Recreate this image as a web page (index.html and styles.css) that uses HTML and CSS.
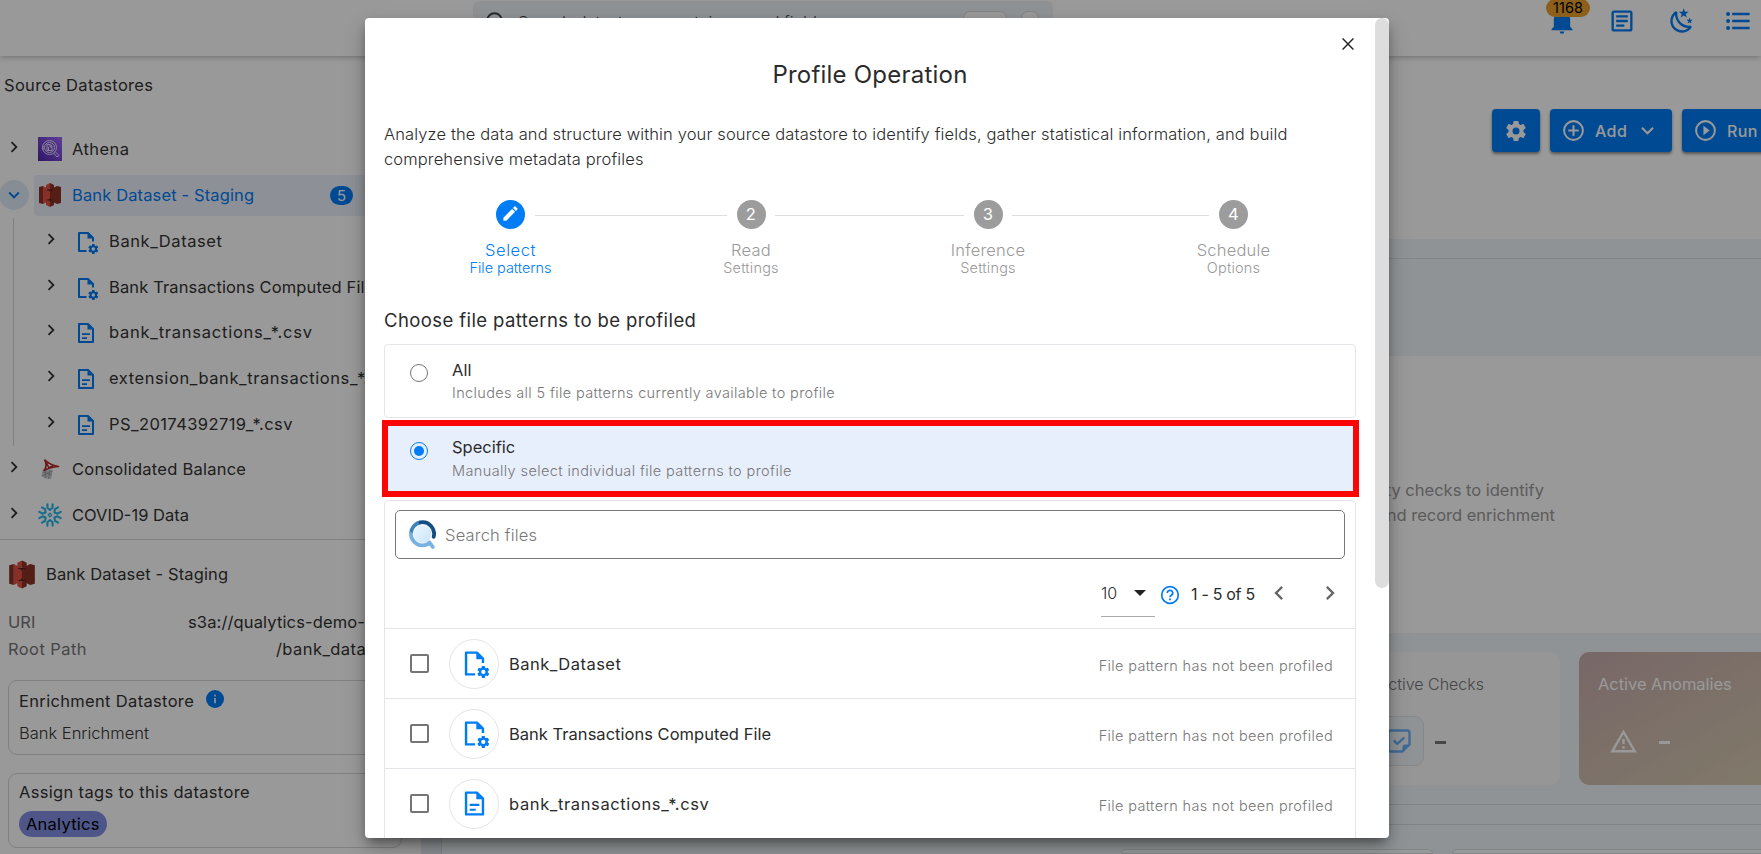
FILE: index.html
```html
<!DOCTYPE html>
<html lang="en">
<head>
<meta charset="utf-8">
<title>Profile Operation</title>
<link rel="stylesheet" href="styles.css">
</head>
<body>
<svg class="sprite" width="0" height="0" aria-hidden="true">
  <defs>
    <linearGradient id="athena" x1="0" y1="1" x2="1" y2="0"><stop offset="0" stop-color="#4d27a8"/><stop offset="1" stop-color="#a166ff"/></linearGradient>
    <linearGradient id="lens" x1="0" y1="0" x2="1" y2="1"><stop offset="0" stop-color="#eef8ff"/><stop offset="1" stop-color="#c7e4f9"/></linearGradient>
  </defs>
  <symbol id="i-right" viewBox="0 0 24 24"><path fill="currentColor" d="M8.59,16.58L13.17,12L8.59,7.41L10,6L16,12L10,18L8.59,16.58Z"/></symbol>
  <symbol id="i-left" viewBox="0 0 24 24"><path fill="currentColor" d="M15.41,16.58L10.83,12L15.41,7.41L14,6L8,12L14,18L15.41,16.58Z"/></symbol>
  <symbol id="i-down" viewBox="0 0 24 24"><path fill="currentColor" d="M7.41,8.58L12,13.17L16.59,8.58L18,10L12,16L6,10L7.41,8.58Z"/></symbol>
  <symbol id="i-cog" viewBox="0 0 24 24"><path fill="currentColor" d="M12,15.5A3.5,3.5 0 0,1 8.5,12A3.5,3.5 0 0,1 12,8.5A3.5,3.5 0 0,1 15.5,12A3.5,3.5 0 0,1 12,15.5M19.43,12.97C19.47,12.65 19.5,12.33 19.5,12C19.5,11.67 19.47,11.34 19.43,11L21.54,9.37C21.73,9.22 21.78,8.95 21.66,8.73L19.66,5.27C19.54,5.05 19.27,4.96 19.05,5.05L16.56,6.05C16.04,5.66 15.5,5.32 14.87,5.07L14.5,2.42C14.46,2.18 14.25,2 14,2H10C9.75,2 9.54,2.18 9.5,2.42L9.13,5.07C8.5,5.32 7.96,5.66 7.44,6.05L4.95,5.05C4.73,4.96 4.46,5.05 4.34,5.27L2.34,8.73C2.21,8.95 2.27,9.22 2.46,9.37L4.57,11C4.53,11.34 4.5,11.67 4.5,12C4.5,12.33 4.53,12.65 4.57,12.97L2.46,14.63C2.27,14.78 2.21,15.05 2.34,15.27L4.34,18.73C4.46,18.95 4.73,19.03 4.95,18.95L7.44,17.94C7.96,18.34 8.5,18.68 9.13,18.93L9.5,21.58C9.54,21.82 9.75,22 10,22H14C14.25,22 14.46,21.82 14.5,21.58L14.87,18.93C15.5,18.67 16.04,18.34 16.56,17.94L19.05,18.95C19.27,19.03 19.54,18.95 19.66,18.73L21.66,15.27C21.78,15.05 21.73,14.78 21.54,14.63L19.43,12.97Z"/></symbol>
  <symbol id="i-file" viewBox="0 0 24 24"><path fill="none" stroke="currentColor" stroke-width="2" stroke-linejoin="round" d="M5 3H14L19 8V21H5Z"/><path fill="currentColor" d="M13.500 2L20 8.500H13.500Z"/><path stroke="currentColor" stroke-width="1.800" d="M8 13.200H16M8 17.200H13"/></symbol>
  <symbol id="i-filecog" viewBox="0 0 24 24" overflow="visible"><path fill="none" stroke="currentColor" stroke-width="2" stroke-linejoin="round" d="M12.500 21H5V3H14L19 8V11.500"/><path fill="currentColor" d="M13.500 2L20 8.500H13.500Z"/><svg x="13.300" y="13" width="12" height="12" viewBox="0 0 24 24"><use href="#i-cog"/></svg></symbol>
  <symbol id="i-s3" viewBox="0 0 24 26"><path fill="#8c3123" d="M1 5L5 4V22L1 21Z"/><path fill="#e05243" d="M5 4L11 7V19L5 22Z"/><path fill="#8c3123" d="M23 5L19 4L13 7V19L19 22L23 21Z"/><path fill="#8c3123" d="M11 8H13V18H11Z"/><path fill="#8c3123" d="M12 1L16 3V8L12 7Z"/><path fill="#e05243" d="M12 1L8 3V8L12 7Z"/><path fill="#e05243" d="M12 25L8 23V18L12 19Z"/><path fill="#8c3123" d="M12 25L16 23V18L12 19Z"/><path fill="#e05243" d="M8 10L12 9.500V16.500L8 16Z"/><path fill="#8c3123" d="M16 10L12 9.500V16.500L16 16Z"/><path fill="#5e1f18" d="M8 8L12 7L16 8L12 9ZM8 18L12 17L16 18L12 19Z"/></symbol>
  <symbol id="i-athena" viewBox="0 0 24 24"><path fill="url(#athena)" d="M0 0H24V24H0Z"/><g fill="none" stroke="#e6dcff" stroke-width="1"><circle cx="11.500" cy="10.500" r="7"/><circle cx="11.500" cy="10.500" r="5"/><path d="M9 7.500H12L14 9V13.500H9ZM12 7.500V10H14M10.500 10V13M15.500 16L19 20L21 18.500L17 14.500M4 10H6M4 12H6"/></g></symbol>
  <symbol id="i-sql" viewBox="0 0 24 24"><path fill="#c9ccd0" d="M5 12L15 13L13 22L8 21.500L3.500 19Z"/><path stroke="#8d9094" stroke-width=".7" fill="none" d="M4.500 15L14 18M8 12.500L7 21M12 13L10.500 22M4 19L14 14"/><path fill="none" stroke="#b5292a" stroke-width="1.600" stroke-linejoin="round" d="M6.500 2.500C8.500 6.500 9 10 6 13.500C10 11 15 10 20.500 9.500C15 8.500 10 6.500 6.500 2.500M8.500 6L11 11L15 8.500"/></symbol>
  <symbol id="i-snow" viewBox="0 0 24 24"><g fill="none" stroke="#29b5e8" stroke-width="2.100" stroke-linecap="round" stroke-linejoin="round"><g id="arm"><path d="M9.400 1.200V4.800L12 6.900L14.600 4.800V1.200"/></g><use href="#arm" transform="rotate(60 12 12)"/><use href="#arm" transform="rotate(120 12 12)"/><use href="#arm" transform="rotate(180 12 12)"/><use href="#arm" transform="rotate(240 12 12)"/><use href="#arm" transform="rotate(300 12 12)"/></g><path fill="none" stroke="#29b5e8" stroke-width="1.200" d="M12 10.200L13.800 12L12 13.800L10.200 12Z"/></symbol>
</svg>

<div class="app">
  <header class="topbar">
    <div class="omnibox">
      <svg class="ico22" viewBox="0 0 22 22"><circle cx="10.500" cy="9.500" r="7.300" fill="none" stroke="#444" stroke-width="2"/><path stroke="#444" stroke-width="2" d="M16 15l5 5"/></svg>
      <span class="omnibox-text">Search datastores, containers and fields</span>
      <span class="key key-wide"></span><span class="key"></span>
    </div>
    <div class="top-icons">
      <div class="bell"><svg class="ico28" viewBox="0 0 24 24"><path fill="currentColor" d="M21,19V20H3V19L5,17V11C5,7.900 7.030,5.170 10,4.290C10,4.190 10,4.100 10,4A2,2 0 0,1 12,2A2,2 0 0,1 14,4C14,4.100 14,4.190 14,4.290C16.970,5.170 19,7.900 19,11V17L21,19M14,21A2,2 0 0,1 12,23A2,2 0 0,1 10,21"/></svg><span class="bell-count">1168</span></div>
      <svg class="ico28" viewBox="0 0 24 24"><path fill="currentColor" d="M5,3C3.890,3 3,3.890 3,5V19C3,20.110 3.890,21 5,21H19C20.110,21 21,20.110 21,19V5C21,3.890 20.110,3 19,3H5M5,5H19V19H5V5M7,7V9H17V7H7M7,11V13H17V11H7M7,15V17H14V15H7Z"/></svg>
      <svg class="ico28" viewBox="0 0 24 24"><path fill="currentColor" d="M17.750,4.090L15.220,6.030L16.130,9.090L13.500,7.280L10.870,9.090L11.780,6.030L9.250,4.090L12.440,4L13.500,1L14.560,4L17.750,4.090M21.250,11L19.610,12.250L20.200,14.230L18.500,13.060L16.800,14.230L17.390,12.250L15.750,11L17.810,10.950L18.500,9L19.190,10.950L21.250,11M18.970,15.950C19.800,15.870 20.690,17.050 20.160,17.800C19.840,18.250 19.500,18.670 19.080,19.070C15.170,23 8.840,23 4.940,19.070C1.030,15.170 1.030,8.830 4.940,4.930C5.340,4.530 5.760,4.170 6.210,3.850C6.960,3.320 8.140,4.210 8.060,5.040C7.790,7.900 8.750,10.870 10.950,13.060C13.140,15.260 16.100,16.220 18.970,15.950M17.330,17.970C14.500,17.810 11.700,16.640 9.530,14.500C7.360,12.310 6.200,9.500 6.040,6.680C3.230,9.820 3.340,14.640 6.350,17.660C9.370,20.670 14.190,20.780 17.330,17.970Z"/></svg>
      <svg class="ico28 list-icon" viewBox="0 0 24 24"><path fill="currentColor" d="M7,5H22V7H7V5M7,13V11H22V13H7M3.500,4.300A1.700,1.700 0 1,1 3.490,7.700A1.700,1.700 0 0,1 3.500,4.300M3.500,10.300A1.700,1.700 0 1,1 3.490,13.700A1.700,1.700 0 0,1 3.500,10.300M7,19V17H22V19H7M3.500,16.300A1.700,1.700 0 1,1 3.490,19.700A1.700,1.700 0 0,1 3.500,16.300Z"/></svg>
    </div>
  </header>

  <div class="body">
    <aside class="sidebar">
      <h2 class="side-title">Source Datastores</h2>
      <div class="node"><svg class="chev"><use href="#i-right"/></svg><div class="node-main"><svg class="ds"><use href="#i-athena"/></svg><span class="ls4">Athena</span></div></div>
      <div class="node node-open"><span class="chev-round"><svg class="chev"><use href="#i-down"/></svg></span><div class="node-main selected"><svg class="ds"><use href="#i-s3"/></svg><span class="ls1">Bank Dataset - Staging</span><span class="count">5</span></div></div>
      <div class="children">
        <div class="child"><svg class="chev"><use href="#i-right"/></svg><svg class="doc"><use href="#i-filecog"/></svg><span class="ls6">Bank_Dataset</span></div>
        <div class="child"><svg class="chev"><use href="#i-right"/></svg><svg class="doc"><use href="#i-filecog"/></svg><span class="ls1">Bank Transactions Computed File</span></div>
        <div class="child"><svg class="chev"><use href="#i-right"/></svg><svg class="doc"><use href="#i-file"/></svg><span class="ls7">bank_transactions_*.csv</span></div>
        <div class="child"><svg class="chev"><use href="#i-right"/></svg><svg class="doc"><use href="#i-file"/></svg><span class="ls6">extension_bank_transactions_*.csv</span></div>
        <div class="child"><svg class="chev"><use href="#i-right"/></svg><svg class="doc"><use href="#i-file"/></svg><span class="ls4">PS_20174392719_*.csv</span></div>
      </div>
      <div class="node"><svg class="chev"><use href="#i-right"/></svg><div class="node-main"><svg class="ds"><use href="#i-sql"/></svg><span class="ls2">Consolidated Balance</span></div></div>
      <div class="node"><svg class="chev"><use href="#i-right"/></svg><div class="node-main"><svg class="ds"><use href="#i-snow"/></svg><span>COVID-19 Data</span></div></div>

      <section class="details">
        <div class="details-head"><svg class="s3-big"><use href="#i-s3"/></svg><span class="ls1">Bank Dataset - Staging</span></div>
        <div class="kv"><span class="k">URI</span><span class="v ls1">s3a://qualytics-demo-data</span></div>
        <div class="kv kv-path"><span class="k ls4">Root Path</span><span class="v v-path ls4">/bank_dataset/</span></div>
        <div class="box">
          <div class="box-title"><span class="ls3">Enrichment Datastore</span><svg class="info" viewBox="0 0 18 18"><circle cx="9" cy="9" r="9" fill="currentColor"/><path fill="#fff" d="M8.200 8h1.600v5.200H8.200zM8.200 4.800h1.600v1.700H8.200z"/></svg></div>
          <div class="box-value">Bank Enrichment</div>
        </div>
        <div class="box box-tags">
          <div class="box-title ls3">Assign tags to this datastore</div>
          <span class="tag ls2">Analytics</span>
        </div>
      </section>
    </aside>

    <main class="main">
      <div class="actions">
        <span class="btn btn-icon"><svg class="ico24"><use href="#i-cog"/></svg></span>
        <span class="btn btn-add"><svg class="ico25" viewBox="0 0 24 24"><path fill="currentColor" d="M12,20C7.590,20 4,16.410 4,12C4,7.590 7.590,4 12,4C16.410,4 20,7.590 20,12C20,16.410 16.410,20 12,20M12,2A10,10 0 0,0 2,12A10,10 0 0,0 12,22A10,10 0 0,0 22,12A10,10 0 0,0 12,2M13,7H11V11H7V13H11V17H13V13H17V11H13V7Z"/></svg>Add<svg class="ico25 caret"><use href="#i-down"/></svg></span>
        <span class="btn btn-run"><svg class="ico25" viewBox="0 0 24 24"><path fill="currentColor" d="M12,20C7.590,20 4,16.410 4,12C4,7.590 7.590,4 12,4C16.410,4 20,7.590 20,12C20,16.410 16.410,20 12,20M12,2A10,10 0 0,0 2,12A10,10 0 0,0 12,22A10,10 0 0,0 22,12A10,10 0 0,0 12,2M10,16.500L16,12L10,7.500V16.500Z"/></svg>Run</span>
      </div>
      <div class="panel">
        <div class="strip"></div>
        <div class="empty"><p>quality checks to identify</p><p class="second">and record enrichment</p></div>
        <div class="cards">
          <div class="card checks">
            <div class="card-title">Active Checks</div>
            <div class="card-value"><span class="tile"><svg class="ico28" viewBox="0 0 24 24"><path fill="none" stroke="currentColor" stroke-width="2" stroke-linejoin="round" d="M3 5Q3 3 5 3H19Q21 3 21 5V15L15 21H5Q3 21 3 19Z"/><path fill="currentColor" d="M21 15L15 21V17Q15 15 17 15Z"/><path fill="none" stroke="currentColor" stroke-width="2" d="M7.500 11.500L10.500 14.500L16.500 9"/></svg></span><i class="dash"></i></div>
          </div>
          <div class="card anomalies">
            <div class="card-title">Active Anomalies</div>
            <div class="card-value"><svg class="warn" viewBox="0 0 24 24"><path fill="currentColor" d="M12,2L1,21H23M12,6L19.530,19H4.470M11,10V14H13V10M11,16V18H13V16"/></svg><i class="dash"></i></div>
          </div>
        </div>
        <div class="rule"></div>
        <div class="cells"><span></span><span></span></div>
      </div>
    </main>
  </div>
  <div class="scrim"></div>
</div>

<div class="dialog">
  <svg class="close" viewBox="0 0 12 12"><path stroke="#222" stroke-width="1.400" d="M.6.6l10.800 10.800M11.400.6L.6 11.400"/></svg>
  <span class="scrollbar"></span>
  <h1 class="dialog-title">Profile Operation</h1>
  <p class="desc">Analyze the data and structure within your source datastore to identify fields, gather statistical information, and build<br>comprehensive metadata profiles</p>
  <div class="stepper">
    <div class="step active"><span class="dot"><svg class="pencil" viewBox="0 0 24 24"><path fill="currentColor" d="M20.710,7.040C21.100,6.650 21.100,6 20.710,5.630L18.370,3.290C18,2.900 17.350,2.900 16.960,3.290L15.120,5.120L18.870,8.870M3,17.250V21H6.750L17.810,9.930L14.060,6.180L3,17.250Z"/></svg></span><b class="ls5">Select</b><small class="tight">File patterns</small></div>
    <i class="line"></i>
    <div class="step"><span class="dot">2</span><b>Read</b><small>Settings</small></div>
    <i class="line"></i>
    <div class="step"><span class="dot">3</span><b>Inference</b><small>Settings</small></div>
    <i class="line"></i>
    <div class="step"><span class="dot">4</span><b>Schedule</b><small>Options</small></div>
  </div>
  <h3 class="choose">Choose file patterns to be profiled</h3>
  <div class="option"><span class="radio"></span><div><div class="opt-title">All</div><div class="opt-sub">Includes all 5 file patterns currently available to profile</div></div></div>
  <div class="option picked"><span class="radio on"></span><div><div class="opt-title">Specific</div><div class="opt-sub">Manually select individual file patterns to profile</div></div><span class="highlight"></span></div>
  <div class="files">
    <div class="search"><svg class="q" viewBox="0 0 27 29"><circle cx="13.500" cy="13.800" r="9" fill="url(#lens)"/><g fill="none" stroke-width="3.800"><path stroke="#3f83bd" d="M1.900 13.800A11.600 11.600 0 0 1 11.500 2.400"/><path stroke="#134f80" d="M11.500 2.400A11.600 11.600 0 0 1 24.700 16.800" stroke-linecap="round"/><path stroke="#76b2e4" d="M1.900 13.800A11.600 11.600 0 0 0 18.500 24.200L20.500 22.500L23.800 27" stroke-linecap="round" stroke-linejoin="round"/></g></svg>Search files</div>
    <div class="pager">
      <span class="size">10<i class="tri"></i></span>
      <svg class="help" viewBox="0 0 20 20"><circle cx="10" cy="10" r="8.300" fill="none" stroke="currentColor" stroke-width="1.700"/><path fill="none" stroke="currentColor" stroke-width="1.700" d="M7.300 8a2.700 2.600 0 1 1 4 2.200Q10 11 10 12.300"/><path fill="currentColor" d="M9.100 13.500h1.800v1.800H9.100z"/></svg>
      <span class="range">1 - 5 of 5</span>
      <svg class="pg"><use href="#i-left"/></svg>
      <svg class="pg"><use href="#i-right"/></svg>
    </div>
    <div class="row"><span class="check"></span><span class="avatar"><svg><use href="#i-filecog"/></svg></span><span class="fname fname-1">Bank_Dataset</span><span class="state">File pattern has not been profiled</span></div>
    <div class="row"><span class="check"></span><span class="avatar"><svg><use href="#i-filecog"/></svg></span><span class="fname">Bank Transactions Computed File</span><span class="state">File pattern has not been profiled</span></div>
    <div class="row"><span class="check"></span><span class="avatar"><svg><use href="#i-file"/></svg></span><span class="fname fname-3">bank_transactions_*.csv</span><span class="state">File pattern has not been profiled</span></div>
  </div>
</div>
</body>
</html>
```
FILE: styles.css
```css
* { box-sizing: border-box; }
:root { --blue: #007cf5; --ink: #333; --line: #e4e5e9; }
body { margin: 0; width: 1761px; height: 854px; overflow: hidden; font: 400 16.5px/24px Inter, sans-serif; color: var(--ink); position: relative; background: #fff; }
h1, h2, h3, p { margin: 0; font-weight: 400; }
svg { display: block; flex: none; }
.sprite { position: absolute; }
.ls1 { letter-spacing: .13px; } .ls2 { letter-spacing: .24px; } .ls3 { letter-spacing: .33px; }
.ls4 { letter-spacing: .42px; } .ls5 { letter-spacing: .55px; } .ls6 { letter-spacing: .58px; } .ls7 { letter-spacing: .76px; }
.ico22 { width: 22px; height: 22px; } .ico24 { width: 24px; height: 24px; }
.ico25 { width: 25px; height: 25px; } .ico28 { width: 28px; height: 28px; }

.app { height: 854px; overflow: hidden; display: flex; flex-direction: column; position: relative; }
.scrim { position: absolute; inset: 0; background: rgba(0, 0, 0, .4); z-index: 2; }

/* top bar */
.topbar { height: 56px; flex: none; display: flex; align-items: flex-start; padding-left: 473px; background: #fff; box-shadow: 0 1px 6px rgba(0, 0, 0, .28); position: relative; z-index: 1; }
.omnibox { width: 580px; height: 42px; margin-top: 1px; border-radius: 6px; background: #eef4f8; display: flex; align-items: center; padding: 0 14px 0 11px; }
.omnibox-text { font-weight: 300; color: #444; margin-left: 12px; flex: 1; }
.key { width: 18px; height: 22px; border-radius: 7px; border: 1px solid #d5dadd; background: #fff; margin-left: 14px; }
.key-wide { width: 44px; }
.top-icons { display: flex; gap: 32px; margin: 7px 0 0 495px; color: var(--blue); }
.bell { position: relative; }
.bell-count { position: absolute; left: -2px; top: -8px; width: 44px; height: 18px; border-radius: 9px; background: #e9a02e; color: #000; font-size: 14.5px; line-height: 18px; text-align: center; }
.list-icon { margin-left: -4px; }

.body { flex: 1; display: flex; min-height: 0; }

/* datastore tree */
.sidebar { width: 421px; flex: none; background: #fff; }
.side-title { font-size: 16.5px; line-height: 24px; padding: 17px 0 0 4px; margin-bottom: 29px; letter-spacing: .32px; }
.node { height: 46px; display: flex; align-items: center; padding-right: 19px; }
.node > .chev { width: 22px; height: 22px; margin: -4px 0 0 3px; }
.node-main { flex: 1; height: 41px; margin-left: 9px; padding-left: 4px; border-radius: 4px; display: flex; align-items: center; gap: 10px; white-space: nowrap; }
.ds { width: 24px; height: 26px; }
.chev { width: 22px; height: 22px; }
.chev-round { width: 30px; height: 30px; border-radius: 50%; background: #e2ecf8; color: var(--blue); display: flex; align-items: center; justify-content: center; flex: none; margin-left: -1px; }
.node-open .node-main { margin-left: 5px; }
.selected { background: #ebf0fb; color: var(--blue); }
.count { margin-left: auto; margin-right: 49px; width: 23px; height: 19px; border-radius: 10px; background: var(--blue); color: #fff; font-size: 15px; line-height: 19px; text-align: center; }
.children { margin-left: 13px; border-left: 1px solid #d8d8d8; height: 228px; }
.child { height: 45.800px; display: flex; align-items: center; padding-left: 26px; white-space: nowrap; width: 408px; overflow: hidden; }
.child .chev { margin-top: -4px; }
.doc { width: 24px; height: 24px; color: var(--blue); margin: 2px 11px 0 12px; overflow: visible; }

.details { border-top: 1px solid #d8d8d8; margin-top: 1px; padding: 17px 19px 0 8px; }
.details-head { display: flex; align-items: center; gap: 10px; height: 34px; }
.s3-big { width: 28px; height: 31px; }
.kv { display: flex; height: 27px; align-items: center; margin-top: 17px; white-space: nowrap; }
.kv-path { margin-top: 0; }
.k { width: 180px; color: #767676; }
.v-path { margin-left: 88px; }
.box { border: 1px solid #d6d6d6; border-radius: 9px; height: 75px; margin-top: 18px; padding: 8px 10px; }
.box-tags { padding-top: 6px; }
.box-title { display: flex; align-items: center; line-height: 24px; }
.info { width: 18px; height: 18px; margin: -4px 0 0 12px; color: var(--blue); }
.box-value { font-weight: 300; margin-top: 8px; }
.tag { display: inline-block; height: 26px; line-height: 26px; border-radius: 13px; background: #8390e4; color: #000; padding: 0 7px; margin-top: 7px; width: 88px; white-space: nowrap; }

/* main column */
.main { flex: 1; min-width: 0; background: #fff; display: flex; flex-direction: column; }
.actions { height: 183px; flex: none; padding: 53px 0 0 1071px; display: flex; gap: 10px; }
.btn { height: 43px; flex: none; border-radius: 4px; background: var(--blue); color: #fff; display: flex; align-items: center; font-weight: 500; font-size: 16px; letter-spacing: .4px; box-shadow: 0 2px 3px rgba(0, 0, 0, .45); }
.btn-icon { width: 48px; justify-content: center; }
.btn-add { width: 122px; padding-left: 11px; gap: 9px; }
.btn-run { width: 140px; padding-left: 11px; gap: 9px; }
.caret { margin-left: -1px; }
.panel { flex: 1; min-height: 0; background: linear-gradient(90deg, #e4ebf2 20px, #d3dadd 20px, #d3dadd 21px, #eef5f9 21px); padding-top: 19px; display: flex; flex-direction: column; }
.strip { height: 98px; flex: none; margin-left: 20px; border-top: 1px solid #d8dfe3; }
.empty { height: 277px; flex: none; background: #fff; margin-left: 20px; padding: 122px 217px 0 0; text-align: right; color: #999; font-weight: 300; line-height: 25px; }
.second { margin-right: -11px; }
.cards { display: flex; gap: 19px; margin: 19px 0 0 21px; height: 133px; flex: none; }
.card { border-radius: 10px; padding: 20px 19px; flex: none; }
.checks { width: 1118px; background: #fafafc; padding-left: 918px; color: #8a8a8d; }
.card-title { line-height: 24px; font-weight: 300; font-size: 16px; }
.checks .card-title { width: 124px; text-align: right; color: #777; }
.card-value { display: flex; align-items: center; height: 50px; margin-top: 20px; }
.checks .card-value { padding-left: 14px; }
.tile { width: 50px; height: 50px; border: 1px solid #dde3e8; border-radius: 9px; background: #eef5f9; color: #6cb0f8; display: flex; align-items: center; justify-content: center; }
.dash { width: 11px; height: 3px; background: #777; margin: 2px 0 0 11px; }
.anomalies { width: 300px; background: linear-gradient(150deg, #c8acac, #d6cab1 75%); color: #fff; }
.anomalies .card-title { font-weight: 400; font-size: 16.5px; letter-spacing: -.05px; }
.anomalies .dash { background: #fff; margin-left: 21px; }
.warn { width: 29px; height: 29px; margin-left: 11px; }
.rule { height: 21px; flex: none; margin: 19px 0 0 21px; border: 1px solid #d3dadd; border-width: 1px 0; }
.cells { display: flex; gap: 19px; margin: 24px 0 0 700px; height: 20px; }
.cells span { flex: none; width: 312px; background: #fff; border: 1px solid #d8dfe3; border-radius: 6px 6px 0 0; }
.cells span + span { width: 420px; }

/* dialog */
.dialog { position: absolute; left: 365px; top: 18px; width: 1024px; height: 820px; border-radius: 4px; background: #fff; overflow: hidden; z-index: 3; padding: 0 33px 0 19px; color: #2b2b2b; box-shadow: 0 6px 12px -3px rgba(0, 0, 0, .45), 0 10px 22px rgba(0, 0, 0, .2); }
.close { position: absolute; left: 977px; top: 20px; width: 12px; height: 12px; }
.scrollbar { position: absolute; right: 0; top: 0; width: 14px; height: 570px; border-radius: 7px; background: #ddd; }
.dialog-title { font-size: 24px; line-height: 32px; text-align: center; padding-top: 41px; letter-spacing: .22px; width: 972px; }
.desc { font-weight: 300; line-height: 25px; margin-top: 31px; letter-spacing: .13px; white-space: nowrap; }
.stepper { display: grid; grid-template-columns: 49px 192px 48px 189px 48px 197px 49px; margin: 28px 0 0 102px; height: 88px; }
.step { display: flex; flex-direction: column; align-items: center; white-space: nowrap; color: #999; font-weight: 300; letter-spacing: .2px; }
.step b { font-weight: 300; line-height: 20px; margin-top: 11px; }
.step small { font-size: 14.5px; line-height: 16px; }
.step .tight { letter-spacing: -.05px; }
.step .ls5 { letter-spacing: .55px; }
.dot { width: 29px; height: 29px; border-radius: 50%; background: #9c9c9c; color: #fff; font-weight: 400; line-height: 29px; text-align: center; display: flex; align-items: center; justify-content: center; }
.active { color: var(--blue); }
.active .dot { background: var(--blue); }
.pencil { width: 19px; height: 19px; margin-top: -2px; }
.line { height: 1px; background: #ddd; margin-top: 15px; }
.choose { font-size: 18.5px; line-height: 28px; margin-top: 18px; letter-spacing: .41px; }
.option { height: 74px; margin-top: 10px; border: 1px solid var(--line); border-radius: 4px; display: flex; padding: 13px 0 0 25px; position: relative; }
.picked { margin-top: 4px; background: #e8effc; }
.picked .opt-title { margin-top: -1px; }
.radio { width: 18px; height: 18px; border: 1.500px solid #777; border-radius: 50%; margin: 6px 24px 0 0; flex: none; }
.radio.on { border-color: var(--blue); padding: 3px; }
.radio.on::before { content: ""; display: block; width: 10px; height: 10px; border-radius: 50%; background: var(--blue); }
.opt-title { line-height: 24px; }
.opt-sub { font-size: 14.5px; line-height: 22px; font-weight: 300; color: #777; letter-spacing: .36px; }
.picked .opt-sub { letter-spacing: .39px; margin-top: 1px; }
.highlight { position: absolute; inset: -3px -4px -2px -3px; border: 6px solid #fb0505; }
.files { margin-top: 4px; border: 1px solid var(--line); border-radius: 4px; height: 400px; }
.search { height: 49px; margin: 9px 10px 0; border: 1px solid #777; border-radius: 5px; display: flex; align-items: center; gap: 9px; padding-left: 13px; font-weight: 300; color: #777; letter-spacing: .2px; }
.q { width: 27px; height: 29px; margin-top: -1px; }
.pager { height: 70px; display: flex; align-items: center; padding-left: 716px; border-bottom: 1px solid var(--line); }
.size { width: 54px; height: 46px; line-height: 46px; border-bottom: 1px solid #aaa; font-weight: 300; font-size: 16px; display: flex; align-items: center; gap: 17px; }
.tri { border: 6px solid transparent; border-top-color: #222; border-bottom: 0; }
.help { width: 20px; height: 20px; color: var(--blue); margin: 2px 0 0 5px; }
.range { font-size: 16px; letter-spacing: -.3px; margin-left: 11px; width: 63px; white-space: nowrap; }
.pg { width: 28px; height: 28px; color: #666; margin: -2px 0 0 11px; }
.pg + .pg { margin-left: 23px; }
.row { height: 70px; border-bottom: 1px solid var(--line); display: flex; align-items: center; padding: 0 22px 0 25px; }
.check { width: 19px; height: 19px; border: 2px solid #757575; border-radius: 2px; margin-right: 20px; }
.avatar { width: 50px; height: 50px; border: 1px solid #e4e4e4; border-radius: 50%; color: var(--blue); display: flex; align-items: center; justify-content: center; margin-right: 10px; }
.avatar svg { width: 29px; height: 29px; overflow: visible; }
.fname { margin-top: 1px; letter-spacing: .02px; }
.fname-1 { letter-spacing: .48px; }
.fname-3 { letter-spacing: .62px; }
.state { margin-left: auto; font-weight: 300; font-size: 14.5px; color: #777; letter-spacing: .36px; margin-top: 4px; }
```
